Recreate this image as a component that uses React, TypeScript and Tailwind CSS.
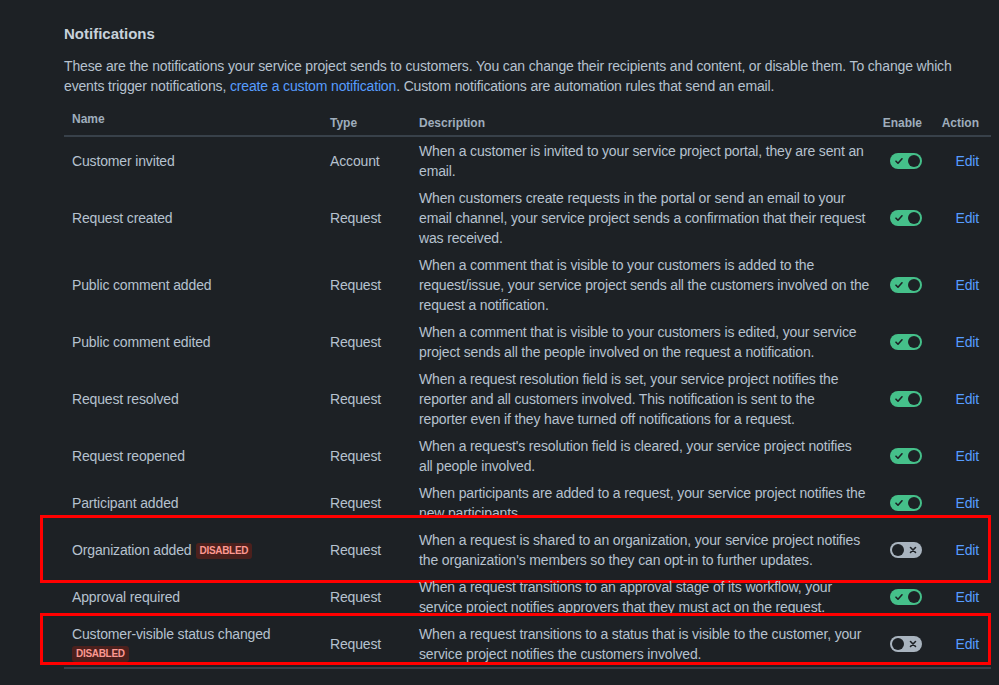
import React from 'react'

type Row = {
  name: string
  type: string
  desc: string[]
  on: boolean
  badge?: 'inline' | 'below'
  box?: string
}

const rows: Row[] = [
  {
    name: 'Customer invited',
    type: 'Account',
    desc: ['When a customer is invited to your service project portal, they are sent an', 'email.'],
    on: true,
  },
  {
    name: 'Request created',
    type: 'Request',
    desc: [
      'When customers create requests in the portal or send an email to your',
      'email channel, your service project sends a confirmation that their request',
      'was received.',
    ],
    on: true,
  },
  {
    name: 'Public comment added',
    type: 'Request',
    desc: [
      'When a comment that is visible to your customers is added to the',
      'request/issue, your service project sends all the customers involved on the',
      'request a notification.',
    ],
    on: true,
  },
  {
    name: 'Public comment edited',
    type: 'Request',
    desc: [
      'When a comment that is visible to your customers is edited, your service',
      'project sends all the people involved on the request a notification.',
    ],
    on: true,
  },
  {
    name: 'Request resolved',
    type: 'Request',
    desc: [
      'When a request resolution field is set, your service project notifies the',
      'reporter and all customers involved. This notification is sent to the',
      'reporter even if they have turned off notifications for a request.',
    ],
    on: true,
  },
  {
    name: 'Request reopened',
    type: 'Request',
    desc: [
      "When a request's resolution field is cleared, your service project notifies",
      'all people involved.',
    ],
    on: true,
  },
  {
    name: 'Participant added',
    type: 'Request',
    desc: [
      'When participants are added to a request, your service project notifies the',
      'new participants.',
    ],
    on: true,
  },
  {
    name: 'Organization added',
    type: 'Request',
    desc: [
      'When a request is shared to an organization, your service project notifies',
      "the organization's members so they can opt-in to further updates.",
    ],
    on: false,
    badge: 'inline',
    box: '-top-[11px] -bottom-[10px]',
  },
  {
    name: 'Approval required',
    type: 'Request',
    desc: [
      'When a request transitions to an approval stage of its workflow, your',
      'service project notifies approvers that they must act on the request.',
    ],
    on: true,
  },
  {
    name: 'Customer-visible status changed',
    type: 'Request',
    desc: [
      'When a request transitions to a status that is visible to the customer, your',
      'service project notifies the customers involved.',
    ],
    on: false,
    badge: 'below',
    box: '-top-[7px] bottom-[2px]',
  },
]

const cols = 'grid grid-cols-[258px_89px_465px_54px_61px]'

function Badge() {
  return (
    <span className="inline-block h-4 rounded-[3px] bg-[#4c201d] px-1 align-middle text-[10px] font-bold uppercase leading-4 tracking-[-0.3px] text-[#fd9891]">
      Disabled
    </span>
  )
}

function Toggle({ on }: { on: boolean }) {
  if (on) {
    return (
      <div className="flex h-4 w-8 items-center justify-between rounded-full bg-[#45c08a] pl-[5px] pr-[2px]">
        <svg width="8" height="8" viewBox="0 0 8 8">
          <path d="M1 4.2l2 2L7 1.8" stroke="#1d2125" strokeWidth="1.6" fill="none" strokeLinecap="round" strokeLinejoin="round" />
        </svg>
        <span className="h-3 w-3 rounded-full bg-[#1d2125]" />
      </div>
    )
  }
  return (
    <div className="flex h-4 w-8 items-center justify-between rounded-full bg-[#a9b4bf] pl-[2px] pr-[5px]">
      <span className="h-3 w-3 rounded-full bg-[#1d2125]" />
      <svg width="8" height="8" viewBox="0 0 8 8">
        <path d="M1.5 1.5l5 5M6.5 1.5l-5 5" stroke="#1d2125" strokeWidth="1.6" strokeLinecap="round" />
      </svg>
    </div>
  )
}

function NotificationRow({ row }: { row: Row }) {
  const lift = row.box ? 'relative z-10' : ''
  return (
    <div className={`relative ${cols}`}>
      {row.box && (
        <div className={`absolute -left-6 right-0 z-0 border-[3px] border-[#ff0000] bg-[#1d2125] ${row.box}`} />
      )}
      <div className={`${lift} flex flex-col justify-center py-[3.5px] pl-2`}>
        <div>
          {row.name}
          {row.badge === 'inline' && (
            <span className="ml-1">
              <Badge />
            </span>
          )}
        </div>
        {row.badge === 'below' && (
          <div className="flex h-5 items-center">
            <Badge />
          </div>
        )}
      </div>
      <div className={`${lift} flex items-center py-[3.5px] pl-2`}>{row.type}</div>
      <div className={`${lift} py-[3.5px] pl-2`}>
        {row.desc.map((line) => (
          <div key={line} className="whitespace-nowrap">
            {line}
          </div>
        ))}
      </div>
      <div className={`${lift} flex items-center justify-end pr-2`}>
        <Toggle on={row.on} />
      </div>
      <div className={`${lift} flex items-center justify-end pr-3`}>
        <a className="text-[#579dff]">Edit</a>
      </div>
    </div>
  )
}

export default function App() {
  return (
    <div className="min-h-screen w-full bg-[#1d2125] font-['Liberation_Sans',Arial,sans-serif] text-sm leading-5 tracking-[-0.15px] text-[#b6c2cf]">
      <div className="ml-16 w-[927px] pt-6">
        <h2 className="text-[15px] font-bold leading-5 tracking-normal text-[#c7d1db]">Notifications</h2>
        <p className="mt-3">
          These are the notifications your service project sends to customers. You can change their recipients and
          content, or disable them. To change which
          <br />
          events trigger notifications, <a className="text-[#579dff]">create a custom notification</a>. Custom
          notifications are automation rules that send an email.
        </p>

        <div className={`${cols} h-[41px] items-end border-b-2 border-[#38414a] text-xs font-bold leading-4 tracking-normal text-[#9fadbc]`}>
          <div className="pb-2 pl-2">Name</div>
          <div className="pb-1 pl-2">Type</div>
          <div className="pb-1 pl-2">Description</div>
          <div className="pb-1 pr-2 text-right">Enable</div>
          <div className="pb-1 pr-3 text-right">Action</div>
        </div>

        <div className="border-b-2 border-[#38414a]">
          {rows.map((row) => (
            <NotificationRow key={row.name} row={row} />
          ))}
        </div>
      </div>
    </div>
  )
}
